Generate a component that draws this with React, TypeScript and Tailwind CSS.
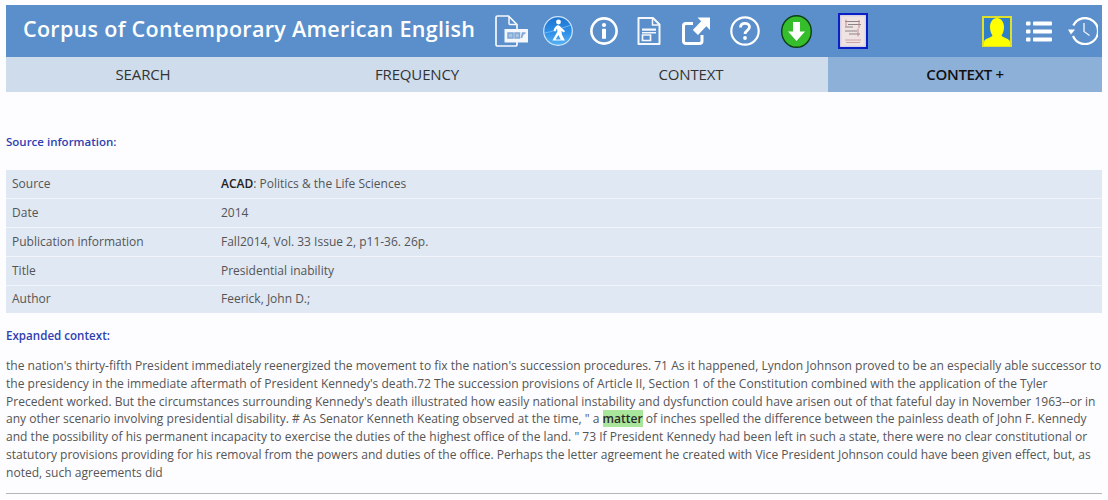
const S = "font-['Open_Sans',sans-serif]";

const icons = {
  pdf: (
    <svg width="33" height="32" viewBox="0 0 33 32" fill="none" className="block">
      <path d="M22 27v2.500a1.500 1.500 0 0 1-1.500 1.500h-18A1.500 1.500 0 0 1 1 29.500v-27A1.500 1.500 0 0 1 2.500 1h11L22 9.500V14" stroke="#f4f8fc" strokeWidth="1.700" strokeLinejoin="round" />
      <path d="M14 1.500V8.500a1 1 0 0 0 1 1h6.500" stroke="#f4f8fc" strokeWidth="1.500" />
      <rect x="9.500" y="14" width="23.500" height="13.500" rx="0.500" fill="#f4f8fc" />
      <path d="M13 18h5v5h-5ZM20 18h4.500v5H20ZM26.500 23l1-5h3" stroke="#7ea6d6" strokeWidth="1.500" fill="#a9c4e3" />
    </svg>
  ),
  walker: (
    <svg width="30" height="30" viewBox="0 0 30 30" className="block">
      <defs>
        <linearGradient id="wk" x1="0" y1="0" x2="0" y2="1">
          <stop offset="0" stopColor="#1d73cf" />
          <stop offset="0.55" stopColor="#2e8fe8" />
          <stop offset="1" stopColor="#58b4f5" />
        </linearGradient>
      </defs>
      <circle cx="15" cy="15" r="14.300" fill="url(#wk)" stroke="#cfe6fa" strokeWidth="1.200" />
      <path d="M1.500 17C9 16 21 11 28.500 9" stroke="#7cc0f4" strokeWidth="0.800" fill="none" />
      <circle cx="15.500" cy="6" r="2.400" fill="#fff" />
      <path d="M14 9.500c-2 1-3 3-3.400 5.500l2 .6c.3-1.300.7-2.300 1.400-3l.4 3-3 5.400-2 3.500h12.500l-3-6-.4-3.500 2.500 1.400 1-1.500-4-3.600c-1-.9-1.700-2.400-4-1.800Zm1.400 9.500 2.400 4.600h-5.200Z" fill="#fff" fillRule="evenodd" />
    </svg>
  ),
  info: (
    <svg width="28" height="28" viewBox="0 0 28 28" fill="none" className="block">
      <circle cx="14" cy="14" r="12.600" stroke="#fff" strokeWidth="2.600" />
      <circle cx="14" cy="8" r="2.100" fill="#fff" />
      <rect x="12" y="11.800" width="4" height="10" rx="0.500" fill="#fff" />
    </svg>
  ),
  doc: (
    <svg width="24" height="28" viewBox="0 0 24 28" fill="none" className="block">
      <path d="M1.500 1h14.500l6.500 6.500V27H1.500Z" stroke="#f4f8fc" strokeWidth="2" strokeLinejoin="round" />
      <path d="M15.500 1.500v6.500h6.500" stroke="#f4f8fc" strokeWidth="1.500" />
      <path d="M5 11.500h14v2.200H5ZM5 15h14v1.500H5Z" fill="#f4f8fc" />
      <path d="M5.500 18h8v5.500h-8Z" stroke="#f4f8fc" strokeWidth="1.700" />
    </svg>
  ),
  share: (
    <svg width="28" height="28" viewBox="0 0 28 28" fill="none" className="block">
      <path d="M11 6.500H4A2.500 2.500 0 0 0 1.500 9v15.500A2.500 2.500 0 0 0 4 26.500h13.500a2.500 2.500 0 0 0 2.500-2.500v-6" stroke="#fff" strokeWidth="3" />
      <path d="M15.500 0.500H28V13l-3.700-3.700-8.300 8.700-5.200-5 8.400-8.800Z" fill="#fff" />
    </svg>
  ),
  help: (
    <svg width="30" height="30" viewBox="0 0 30 30" fill="none" className="block">
      <circle cx="15" cy="15" r="13.700" stroke="#fff" strokeWidth="2.200" />
      <path d="M10.500 11.500c0-2.700 2-4.200 4.500-4.200s4.500 1.400 4.500 3.800c0 3.400-4.400 3.200-4.400 6.900" stroke="#fff" strokeWidth="2.800" />
      <circle cx="15" cy="22" r="1.900" fill="#fff" />
    </svg>
  ),
  download: (
    <svg width="31" height="33" viewBox="0 0 31 33" className="block">
      <ellipse cx="15.500" cy="16.500" rx="14.800" ry="15.800" fill="#35bd2c" stroke="#0d3f10" strokeWidth="1.400" />
      <path d="M12 7h7v9.500h5L15.500 26 7 16.500h5Z" fill="#fff" />
    </svg>
  ),
  thumb: (
    <svg width="30" height="36" viewBox="0 0 30 36" className="block">
      <rect x="1" y="1" width="28" height="34" fill="#f0dfe0" stroke="#0b1fc4" strokeWidth="2.200" />
      <rect x="3" y="3" width="24" height="30" fill="#f0e3e3" stroke="#d6d6e6" strokeWidth="1" />
      <path d="M7 8.500h15M10 11.500h13M7 14h8M7 18h12M11 21h11" stroke="#8c8488" strokeWidth="1" />
      <path d="M8 6.500v7M21 7v8M20 15.500v8" stroke="#c28c8c" strokeWidth="1" />
      <path d="M7 27h16M8 29.500h14" stroke="#c9a6a4" strokeWidth="1" />
    </svg>
  ),
  user: (
    <svg width="30" height="31" viewBox="0 0 30 31" className="block">
      <rect x="1" y="1" width="28" height="29" fill="#2f7fc9" stroke="#dfe02a" strokeWidth="2" />
      <path d="M2 30v-4c0-3.500 6.500-3.800 8.500-6.500-1.500-2-2.500-5-2.500-8.500 0-5 2.800-9 7-9s7 4 7 9c0 3.500-1 6.500-2.500 8.500 2 2.700 8.500 3 8.500 6.500v4Z" fill="#ffff00" />
    </svg>
  ),
  list: (
    <svg width="26" height="21" viewBox="0 0 26 21" fill="#fff" className="block">
      <rect x="0" y="0.500" width="4.500" height="4" rx="1" />
      <rect x="7" y="0.500" width="19" height="4" rx="1" />
      <rect x="0" y="8.500" width="4.500" height="4" rx="1" />
      <rect x="7" y="8.500" width="19" height="4" rx="1" />
      <rect x="0" y="16.500" width="4.500" height="4" rx="1" />
      <rect x="7" y="16.500" width="19" height="4" rx="1" />
    </svg>
  ),
  history: (
    <svg width="30" height="28" viewBox="0 0 30 28" fill="none" className="block">
      <path d="M5.300 8.500A13 13 0 1 1 5 19" stroke="#fff" strokeWidth="2.200" />
      <path d="M0 12.500h7L3 17.500Z" fill="#fff" />
      <path d="M16 6v8.500l5.500 4" stroke="#e8f0fa" strokeWidth="1.400" />
    </svg>
  ),
};

const rows = [
  ["Source", <><b className="font-semibold text-[#222]">ACAD</b>: Politics &amp; the Life Sciences</>],
  ["Date", "2014"],
  ["Publication information", "Fall2014, Vol. 33 Issue 2, p11-36. 26p."],
  ["Title", "Presidential inability"],
  ["Author", "Feerick, John D.;"],
];

const lines = [
  <>the nation's thirty-fifth President immediately reenergized the movement to fix the nation's succession procedures. 71 As it happened, Lyndon Johnson proved to be an especially able successor to</>,
  <>the presidency in the immediate aftermath of President Kennedy's death.72 The succession provisions of Article II, Section 1 of the Constitution combined with the application of the Tyler</>,
  <>Precedent worked. But the circumstances surrounding Kennedy's death illustrated how easily national instability and dysfunction could have arisen out of that fateful day in November 1963--or in</>,
  <>any other scenario involving presidential disability. # As Senator Kenneth Keating observed at the time, " a <mark className="bg-[#a9e59a] text-[#2a2a2a] font-semibold">matter</mark> of inches spelled the difference between the painless death of John F. Kennedy</>,
  <>and the possibility of his permanent incapacity to exercise the duties of the highest office of the land. " 73 If President Kennedy had been left in such a state, there were no clear constitutional or</>,
  <>statutory provisions providing for his removal from the powers and duties of the office. Perhaps the letter agreement he created with Vice President Johnson could have been given effect, but, as</>,
  <>noted, such agreements did</>,
];

const tabs = ["SEARCH", "FREQUENCY", "CONTEXT"];

export default function App() {
  return (
    <div className={`${S} w-[1108px] h-[500px] overflow-hidden bg-[#fdfdff] px-[6px] pt-[5px]`}>
      <div className="h-[52px] bg-[#5a8fcb] flex items-center">
        <div className="w-[489px] pl-[17px] text-white text-[21.5px] font-semibold tracking-[0.3px] whitespace-nowrap leading-none pb-[5px]">
          Corpus of Contemporary American English
        </div>
        <div className="flex items-center h-full">
          <div className="mr-[15px]">{icons.pdf}</div>
          <div className="mr-[17px]">{icons.walker}</div>
          <div className="mr-[19px]">{icons.info}</div>
          <div className="mr-[21px]">{icons.doc}</div>
          <div className="mr-[20px]">{icons.share}</div>
          <div className="mr-[21px]">{icons.help}</div>
          <div className="mr-[26px]">{icons.download}</div>
          <div>{icons.thumb}</div>
        </div>
        <div className="ml-auto flex items-center h-full pr-[4px]">
          <div className="mr-[14px]">{icons.user}</div>
          <div className="mr-[16px]">{icons.list}</div>
          <div>{icons.history}</div>
        </div>
      </div>
      <div className="h-[35px] flex text-[15px] text-[#333]">
        {tabs.map((t) => (
          <div key={t} className="w-[274px] bg-[#cfdcec] flex items-center justify-center pb-[1px] tracking-[-0.15px]">{t}</div>
        ))}
        <div className="flex-1 bg-[#8db0d8] flex items-center justify-center font-semibold text-[#111] pb-[1px] tracking-[-0.3px]">CONTEXT +</div>
      </div>

      <div className="pt-[42px] text-[11.5px] leading-[16px] font-semibold text-[#2f3fb0]">Source information:</div>

      <div className="mt-[20px] text-[12px] text-[#555]">
        {rows.map(([k, v], i) => (
          <div key={i} className="flex h-[29px] bg-[#dfe8f3] border-b border-[#f1f5fa] last:border-b-0 last:h-[27px] pb-[1px] last:pb-[1px]">
            <div className="w-[206px] pl-[6px] flex items-center">{k}</div>
            <div className="pl-[9px] flex items-center">{v}</div>
          </div>
        ))}
      </div>

      <div className="mt-[15px] text-[11.6px] leading-[16px] font-semibold text-[#2f3fb0]">Expanded context:</div>

      <div className="mt-[13px] text-[12.05px] leading-[17.8px] text-[#555] whitespace-nowrap">
        {lines.map((l, i) => (
          <div key={i}>{l}</div>
        ))}
      </div>

      <div className="mt-[11px] w-[1096px] border-t border-[#b5b5b5]" />
    </div>
  );
}
